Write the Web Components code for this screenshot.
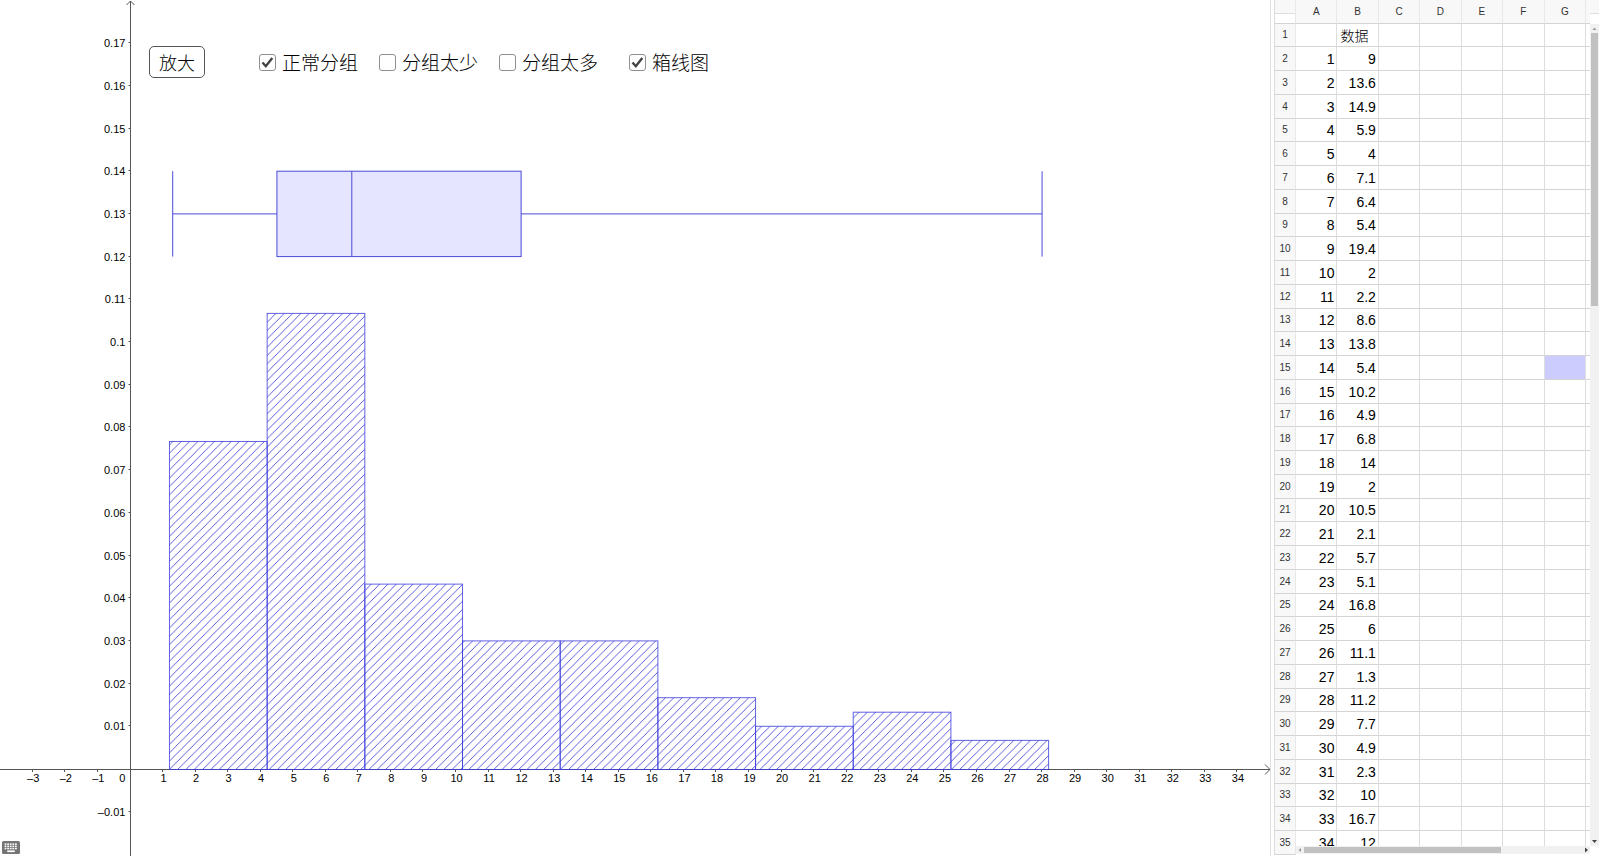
<!DOCTYPE html>
<html lang="zh">
<head>
<meta charset="utf-8">
<title>频率分布直方图</title>
<style>
    body {
        margin: 0;
        background: #fff;
        color: #000;
        font-family: "Liberation Sans", "Noto Sans CJK SC", sans-serif;
    }
</style>
</head>
<body>
<stats-app></stats-app>

<script>
const DATA = [
    9, 13.6, 14.9, 5.9, 4, 7.1, 6.4, 5.4, 19.4, 2, 2.2, 8.6, 13.8, 5.4, 10.2, 4.9, 6.8, 14, 2,
    10.5, 2.1, 5.7, 5.1, 16.8, 6, 11.1, 1.3, 11.2, 7.7, 4.9, 2.3, 10, 16.7, 12
];

const KAI = '"KaiTi", "Kaiti SC", "Noto Sans CJK SC", sans-serif';

class PlotView extends HTMLElement {
    constructor() {
        super();
        this.attachShadow({ mode: 'open' });
        this.origin = { x: 130.4, y: 769 };
        this.unitX = 32.56;
        this.unitY = 42.7; // per 0.01
        this.bars = [0.0767, 0.1067, 0.0433, 0.03, 0.03, 0.0167, 0.01, 0.0133, 0.0067];
        this.box = { min: 1.3, q1: 4.5, median: 6.8, q3: 12, max: 28 };
        this.hiddenLayers = new Set();
    }

    connectedCallback() {
        this.shadowRoot.innerHTML = `
        <style>
            :host {
                display: block;
                position: relative;
                overflow: hidden;
            }

            svg {
                display: block;
                width: 100%;
                height: 100%;
            }

            text {
                font-size: 11px;
                fill: #000;
            }

            .axis {
                stroke: #555;
                fill: none;
            }

            .bar {
                fill: url(#hatch);
                stroke: #3c3ce0;
                stroke-opacity: 0.8;
            }

            .box {
                fill: #e5e5ff;
                stroke: #4a4ad8;
            }

            .whisker {
                stroke: #4a4ad8;
                fill: none;
            }

            .overlay {
                position: absolute;
                top: 46px;
                left: 149px;
            }

            .corner {
                position: absolute;
                left: 2px;
                bottom: 2px;
            }
        </style>
        <svg role="img" aria-label="直方图"></svg>
        <div class="overlay"><slot></slot></div>
        <div class="corner"><slot name="corner"></slot></div>
        `;
        this.svg = this.shadowRoot.querySelector('svg');
        this.addEventListener('layer-toggle', (e) => {
            const { layer, on } = e.detail;
            if (on) {
                this.hiddenLayers.delete(layer);
            } else {
                this.hiddenLayers.add(layer);
            }
            this.draw();
        });
        this.addEventListener('zoom-in', () => {
            this.unitX *= 1.1;
            this.unitY *= 1.1;
            this.draw();
        });
        this.draw();
        new ResizeObserver(() => this.draw()).observe(this);
    }

    px(x) {
        return this.origin.x + x * this.unitX;
    }

    py(y) {
        return this.origin.y - y * 100 * this.unitY;
    }

    axes(w, h) {
        const { x: ox, y: oy } = this.origin;
        const ax = Math.floor(ox) + 0.5;
        const ay = oy + 0.5;
        let out = `
            <path class="axis" d="M0 ${ay}H${w}M${w - 5} ${ay - 5}L${w} ${ay}L${w - 5} ${ay + 5}"/>
            <path class="axis" d="M${ax} ${h}V1M${ax - 4} 5L${ax} 1L${ax + 4} 5"/>`;

        for (let i = Math.ceil((20 - ox) / this.unitX); this.px(i) < w - 20; i++) {
            if (i === 0) {
                out += `<text x="${ox - 5}" y="${oy + 13}" text-anchor="end">0</text>`;
                continue;
            }
            const x = Math.round(this.px(i)) - 0.5;
            const label = i < 0 ? `–${-i}` : i;
            out += `<path class="axis" d="M${x} ${oy}v3"/>
                <text x="${this.px(i) + 0.5}" y="${oy + 13}" text-anchor="middle">${label}</text>`;
        }

        for (let i = -1; oy - i * this.unitY > 20; i++) {
            if (i === 0) continue;
            const y = Math.round(oy - i * this.unitY) - 0.5;
            const label = String(Math.abs(i) / 100);
            out += `<path class="axis" d="M${ax - 2} ${y}h2"/>
                <text x="${ox - 5}" y="${y + 4}" text-anchor="end">${i < 0 ? '–' : ''}${label}</text>`;
        }
        return out;
    }

    histogram() {
        return this.bars.map((value, i) => {
            const x = this.px(1.2 + i * 3);
            const y = this.py(value);
            return `<rect class="bar" x="${x}" y="${y}" width="${3 * this.unitX}" height="${this.origin.y + 0.5 - y}"/>`;
        }).join('');
    }

    boxplot() {
        const { min, q1, median, q3, max } = this.box;
        const top = this.py(0.14);
        const mid = this.py(0.13);
        const low = this.py(0.12);
        return `
            <rect class="box" x="${this.px(q1)}" y="${top}" width="${(q3 - q1) * this.unitX}" height="${low - top}"/>
            <path class="whisker" d="M${this.px(min)} ${top}V${low}M${this.px(max)} ${top}V${low}
                M${this.px(median)} ${top}V${low}
                M${this.px(min)} ${mid}H${this.px(q1)}M${this.px(q3)} ${mid}H${this.px(max)}"/>`;
    }

    draw() {
        const w = this.clientWidth;
        const h = this.clientHeight;
        this.svg.innerHTML = `
            <defs>
                <pattern id="hatch" width="8.32" height="8.32" x="7" y="0" patternUnits="userSpaceOnUse">
                    <path d="M-1 9.32L9.32 -1M-1 1L1 -1M7.32 9.32L9.32 7.32" stroke="#3232d2" stroke-width="0.8"/>
                </pattern>
            </defs>
            ${this.axes(w, h)}
            ${this.hiddenLayers.has('normal') ? '' : this.histogram()}
            ${this.hiddenLayers.has('box') ? '' : this.boxplot()}`;
    }
}

class PlotButton extends HTMLElement {
    constructor() {
        super();
        this.attachShadow({ mode: 'open' });
    }

    connectedCallback() {
        this.shadowRoot.innerHTML = `
        <style>
            :host {
                display: block;
            }

            button {
                display: block;
                box-sizing: border-box;
                height: 32px;
                padding: 0 9px;
                border: 1px solid #555;
                border-radius: 5px;
                background: #fff;
                color: #000;
                font: 300 18px/30px ${KAI};
            }
        </style>
        <button type="button"><slot></slot></button>
        `;
        this.shadowRoot.querySelector('button').addEventListener('click', () => {
            this.dispatchEvent(new CustomEvent('zoom-in', { bubbles: true, composed: true }));
        });
    }
}

class PlotCheck extends HTMLElement {
    constructor() {
        super();
        this.attachShadow({ mode: 'open' });
    }

    connectedCallback() {
        this.shadowRoot.innerHTML = `
        <style>
            :host {
                display: block;
            }

            label {
                display: flex;
                align-items: center;
                gap: 6px;
                color: #000;
                font: 300 19px/26px ${KAI};
                white-space: nowrap;
            }

            .tick {
                display: grid;
            }

            .tick > * {
                grid-area: 1 / 1;
            }

            input {
                appearance: none;
                box-sizing: border-box;
                width: 17px;
                height: 17px;
                margin: 0;
                border: 1px solid #909090;
                border-radius: 3px;
                background: #fff;
            }

            svg {
                width: 17px;
                height: 17px;
                visibility: hidden;
                pointer-events: none;
            }

            input:checked + svg {
                visibility: visible;
            }
        </style>
        <label>
            <span class="tick">
                <input type="checkbox" ${this.hasAttribute('checked') ? 'checked' : ''}>
                <svg viewBox="0 0 17 17" aria-hidden="true">
                    <path d="M3.5 8.5L6.8 12.2L13.3 4" fill="none" stroke="#444" stroke-width="2.4"/>
                </svg>
            </span>
            <slot></slot>
        </label>
        `;
        this.shadowRoot.querySelector('input').addEventListener('change', (e) => {
            this.dispatchEvent(new CustomEvent('layer-toggle', {
                bubbles: true,
                composed: true,
                detail: { layer: this.getAttribute('layer'), on: e.target.checked }
            }));
        });
    }
}

class KeyboardButton extends HTMLElement {
    constructor() {
        super();
        this.attachShadow({ mode: 'open' });
    }

    connectedCallback() {
        const keys = [];
        for (let row = 0; row < 3; row++) {
            for (let col = 0; col < 5; col++) {
                keys.push(`<rect x="${2.6 + col * 2.6}" y="${2.4 + row * 2.2}" width="1.8" height="1.5"/>`);
            }
        }
        this.shadowRoot.innerHTML = `
        <style>
            :host {
                display: block;
            }

            button {
                display: block;
                padding: 0;
                border: 0;
                background: none;
            }

            svg {
                display: block;
                width: 18px;
                height: 13px;
            }
        </style>
        <button type="button" aria-label="键盘">
            <svg viewBox="0 0 18 13">
                <rect width="18" height="13" rx="1.5" fill="#757575"/>
                <g fill="#fff">${keys.join('')}<rect x="5.2" y="9.4" width="7.6" height="1.7"/></g>
            </svg>
        </button>
        `;
    }
}

class DataSheet extends HTMLElement {
    constructor() {
        super();
        this.attachShadow({ mode: 'open' });
    }

    connectedCallback() {
        // the last, unnamed column is the sliver of the next one
        const columns = ['A', 'B', 'C', 'D', 'E', 'F', 'G', ''];
        const rows = [['', '数据'], ...DATA.map((value, i) => [i + 1, value])];

        this.shadowRoot.innerHTML = `
        <style>
            :host {
                display: grid;
                grid-template-columns: 1fr 10px;
                grid-template-rows: 33px 1fr 10px;
                box-sizing: border-box;
                padding-left: 3px;
                border-left: 1px solid #e0e0e0;
                overflow: hidden;
            }

            .sheet {
                grid-area: 1 / 1 / 4 / 2;
                min-height: 0;
                overflow: hidden;
            }

            table {
                width: 100%;
                border-collapse: separate;
                border-spacing: 0;
                table-layout: fixed;
            }

            th, td {
                box-sizing: border-box;
                height: 24px;
                padding: 0;
                border-right: 1px solid #ddd;
                border-bottom: 1px solid #d4d4d4;
            }

            tbody tr:nth-child(4n + 1) > * {
                height: 23px;
            }

            th {
                background: #f8f8f8;
                border-right-color: #e8e8e8;
                color: #333;
                font-size: 10px;
                font-weight: normal;
                line-height: 12px;
            }

            th:first-child {
                width: 22px;
                border-left: 1px solid #ddd;
            }

            th:last-child {
                width: 4px;
                border-right: 0;
            }

            td:last-child {
                padding: 0;
                border-right: 0;
            }

            thead th:first-child {
                background: linear-gradient(#f8f8f8 13px, #ddd 13px, #ddd 14px, #fff 14px);
            }

            td {
                padding-right: 2px;
                font-size: 14px;
                line-height: 16px;
                text-align: right;
            }

            td.text {
                padding-left: 3px;
                font: 300 14px/16px ${KAI};
                text-align: left;
            }

            td.selected {
                background: #ccccff;
            }

            .vbar {
                grid-area: 2 / 2 / 4 / 3;
                display: flex;
                flex-direction: column;
                align-items: center;
                justify-content: space-between;
                margin: -9px 1px 10px 0;
                background: #f1f1f1;
            }

            .hbar {
                grid-area: 3 / 1;
                display: flex;
                align-items: center;
                justify-content: space-between;
                margin-left: 22px;
                border-bottom: 2px solid #fff;
                background: #f1f1f1;
                z-index: 1;
            }

            .vbar i, .hbar i {
                flex: 1;
                display: flex;
            }

            .vbar i {
                width: 7px;
            }

            .vbar b {
                width: 100%;
                height: 34%;
                background: #c1c1c1;
            }

            .hbar b {
                width: 71%;
                height: 6px;
                background: #c1c1c1;
            }

            .vbar svg {
                width: 9px;
                height: 9px;
            }

            .hbar svg {
                width: 8px;
                height: 8px;
            }

            .cap {
                grid-area: 1 / 2;
                height: 13px;
                margin-right: 1px;
                border-bottom: 1px solid #ddd;
                background: #f8f8f8;
            }
        </style>

        <div class="sheet">
            <table>
                <thead>
                    <tr><th></th>${columns.map((name) => `<th>${name}</th>`).join('')}</tr>
                </thead>
                <tbody>
                    ${rows.map((row, r) => `
                        <tr>
                            <th>${r + 1}</th>
                            ${columns.map((name, c) => {
                                const kind = r === 0 ? 'text' : name === 'G' && r === 14 ? 'selected' : '';
                                return `<td class="${kind}">${row[c] ?? ''}</td>`;
                            }).join('')}
                        </tr>
                    `).join('')}
                </tbody>
            </table>
        </div>
        <div class="cap"></div>
        <div class="vbar">
            <svg viewBox="0 0 9 9"><path d="M2.5 6L4.5 3.5L6.5 6z" fill="#999"/></svg>
            <i><b></b></i>
            <svg viewBox="0 0 9 9"><path d="M2 3L4.5 6L7 3z" fill="#444"/></svg>
        </div>
        <div class="hbar">
            <svg viewBox="0 0 8 8"><path d="M5 2L2.5 4L5 6z" fill="#999"/></svg>
            <i><b></b></i>
            <svg viewBox="0 0 8 8"><path d="M3 1.5L6 4L3 6.5z" fill="#444"/></svg>
        </div>
        `;
    }
}

class StatsApp extends HTMLElement {
    constructor() {
        super();
        this.attachShadow({ mode: 'open' });
    }

    connectedCallback() {
        this.shadowRoot.innerHTML = `
        <style>
            :host {
                display: grid;
                grid-template-columns: 1fr 330px;
                grid-template-rows: 100%;
                height: 100vh;
            }

            .controls {
                display: flex;
                align-items: center;
                gap: 54px;
            }

            .layers {
                display: flex;
                gap: 31px;
            }

            .groups {
                display: flex;
                gap: 21px;
            }
        </style>

        <plot-view>
            <div class="controls">
                <plot-button>放大</plot-button>
                <div class="layers">
                    <div class="groups">
                        <plot-check layer="normal" checked>正常分组</plot-check>
                        <plot-check layer="few">分组太少</plot-check>
                        <plot-check layer="many">分组太多</plot-check>
                    </div>
                    <plot-check layer="box" checked>箱线图</plot-check>
                </div>
            </div>
            <keyboard-button slot="corner"></keyboard-button>
        </plot-view>
        <data-sheet></data-sheet>
        `;
    }
}

customElements.define('plot-view', PlotView);
customElements.define('plot-button', PlotButton);
customElements.define('plot-check', PlotCheck);
customElements.define('keyboard-button', KeyboardButton);
customElements.define('data-sheet', DataSheet);
customElements.define('stats-app', StatsApp);
</script>
</body>
</html>
